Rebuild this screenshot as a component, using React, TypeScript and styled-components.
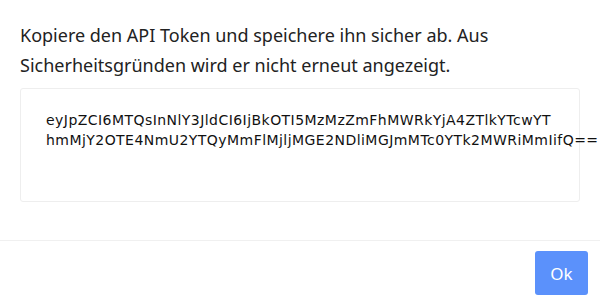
import styled, { createGlobalStyle } from "styled-components";

const GlobalStyle = createGlobalStyle`
  html, body {
    margin: 0;
    padding: 0;
    background: #ffffff;
  }
`;

const Dialog = styled.div`
  width: 600px;
  height: 301px;
  display: flex;
  flex-direction: column;
  background: #ffffff;
  font-family: "Noto Sans", "Open Sans", sans-serif;
  color: #222222;
`;

const Body = styled.div`
  padding: 20px 20px 0 20px;
  height: 240px;
  box-sizing: border-box;
`;

const Message = styled.p`
  margin: 0;
  font-size: 18px;
  line-height: 30px;
  color: #222222;
`;

const TokenBox = styled.div`
  margin-top: 8px;
  height: 114px;
  box-sizing: border-box;
  border: 1px solid #eeeeee;
  border-radius: 3px;
  padding: 21px 20px 0 25px;
`;

const Token = styled.div`
  font-family: "DejaVu Sans", Verdana, sans-serif;
  font-size: 14px;
  letter-spacing: 0.45px;
  line-height: 20px;
  color: #111111;
  white-space: nowrap;
`;

const TokenLine = styled.div``;

const Footer = styled.div`
  border-top: 1px solid #f0f0f0;
  flex: 1;
  display: flex;
  justify-content: flex-end;
  align-items: flex-start;
  padding: 10px 12px 0 0;
`;

const Button = styled.button`
  width: 53px;
  height: 44px;
  border: none;
  border-radius: 3px;
  background: #5b91fb;
  color: #ffffff;
  font-family: "Noto Sans", "Open Sans", sans-serif;
  font-size: 17px;
  cursor: pointer;
`;

const token =
  "eyJpZCI6MTQsInNlY3JldCI6IjBkOTI5MzMzZmFhMWRkYjA4ZTlkYTcwYThmMjY2OTE4NmU2YTQyMmFlMjljMGE2NDliMGJmMTc0YTk2MWRiMmIifQ==";

const chunk = (s: string, n: number) =>
  s.match(new RegExp(`.{1,${n}}`, "g")) ?? [];

export default function App() {
  return (
    <>
      <GlobalStyle />
      <Dialog>
        <Body>
          <Message>
            Kopiere den API Token und speichere ihn sicher ab. Aus
            Sicherheitsgründen wird er nicht erneut angezeigt.
          </Message>
          <TokenBox>
            <Token>
              {chunk(token, 58).map((line, i) => (
                <TokenLine key={i}>{line}</TokenLine>
              ))}
            </Token>
          </TokenBox>
        </Body>
        <Footer>
          <Button>Ok</Button>
        </Footer>
      </Dialog>
    </>
  );
}
